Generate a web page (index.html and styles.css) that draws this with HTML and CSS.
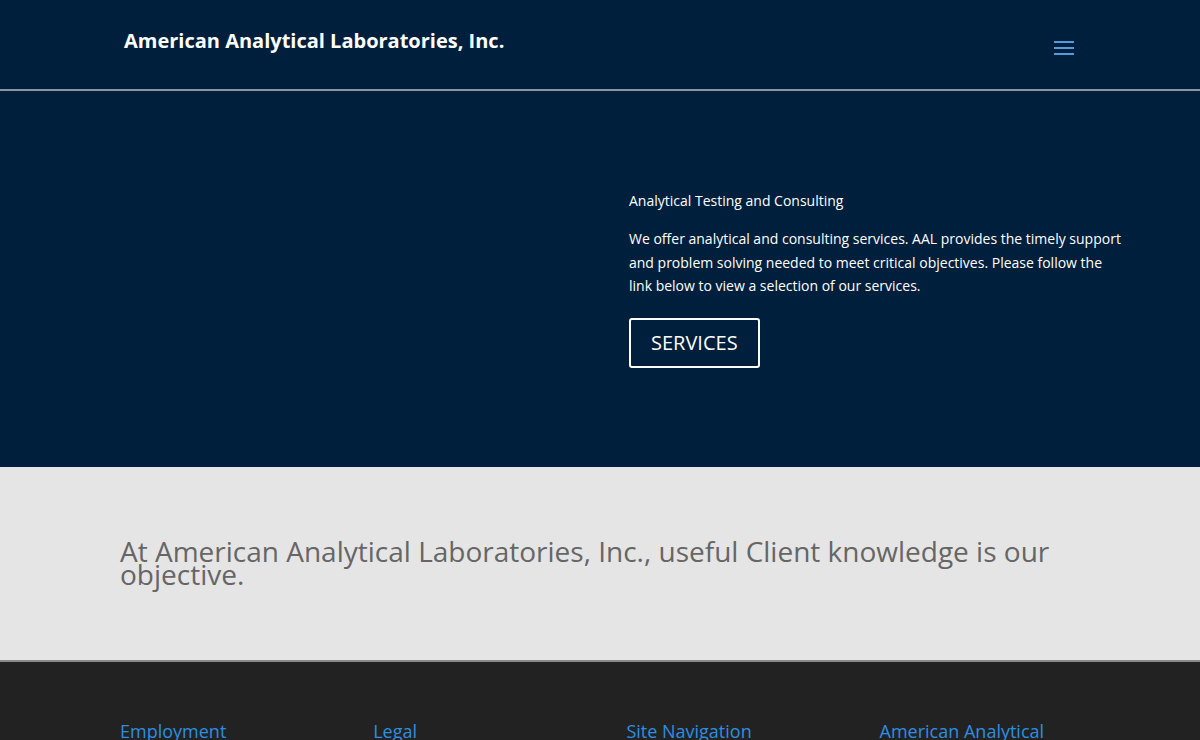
FILE: index.html
```html
<!DOCTYPE html>
<html lang="en">
<head>
    <meta charset="UTF-8">
    <meta name="viewport" content="width=device-width, initial-scale=1.0">
    <title>American Analytical Laboratories, Inc.</title>
    <link rel="stylesheet" href="styles.css">
</head>
<body>
    <!-- Header -->
    <header class="site-header">
        <div class="container header-inner">
            <a href="#" class="logo">American Analytical Laboratories, Inc.</a>
            <button class="menu-toggle" aria-label="Menu">
                <span></span>
                <span></span>
                <span></span>
            </button>
        </div>
    </header>

    <!-- Hero -->
    <section class="hero">
        <div class="container-wide hero-row">
            <div class="hero-col"></div>
            <div class="hero-col hero-text">
                <h4 class="hero-title">Analytical Testing and Consulting</h4>
                <p>We offer analytical and consulting services. AAL provides the timely support and problem solving needed to meet critical objectives. Please follow the link below to view a selection of our services.</p>
                <a href="#" class="btn-outline">SERVICES</a>
            </div>
        </div>
    </section>

    <!-- Tagline -->
    <section class="tagline">
        <div class="container">
            <h2>At American Analytical Laboratories, Inc., useful Client knowledge is our objective.</h2>
        </div>
    </section>

    <!-- Footer -->
    <footer class="site-footer">
        <div class="container footer-row">
            <div class="footer-col"><h4>Employment</h4></div>
            <div class="footer-col"><h4>Legal</h4></div>
            <div class="footer-col"><h4>Site Navigation</h4></div>
            <div class="footer-col"><h4>American Analytical</h4></div>
        </div>
    </footer>
</body>
</html>
```

FILE: styles.css
```css
* {
    margin: 0;
    padding: 0;
    box-sizing: border-box;
}

body {
    font-family: "Open Sans", Arial, sans-serif;
    background-color: #222222;
    color: #ffffff;
    font-size: 14px;
}

.container {
    width: 960px;
    margin: 0 auto;
}

.container-wide {
    width: 1080px;
    margin: 0 auto;
}

/* Header */
.site-header {
    background-color: #001f3c;
    border-bottom: 2px solid #8a95a1;
}

.header-inner {
    height: 89px;
    display: flex;
    justify-content: space-between;
    align-items: center;
}

.logo {
    color: #ffffff;
    text-decoration: none;
    font-weight: 700;
    font-size: 20px;
    margin-left: 4px;
    margin-top: -9px;
}

.menu-toggle {
    background: none;
    border: none;
    width: 20px;
    margin-right: 6px;
    margin-top: 7px;
    display: flex;
    flex-direction: column;
    gap: 4px;
    cursor: pointer;
}

.menu-toggle span {
    display: block;
    height: 2px;
    width: 20px;
    background-color: #569cda;
}

/* Hero */
.hero {
    background-color: #001f3c;
    padding: 98px 0 99px;
}

.hero-row {
    display: flex;
    gap: 59px;
}

.hero-col {
    width: 510px;
}

.hero-text {
    padding-right: 16px;
}

.hero-title {
    font-size: 14px;
    font-weight: 400;
    line-height: 23.8px;
    margin-bottom: 14px;
}

.hero-text p {
    font-size: 14px;
    line-height: 23.8px;
    margin-bottom: 20px;
}

.btn-outline {
    display: inline-block;
    color: #ffffff;
    text-decoration: none;
    font-size: 20px;
    line-height: 34px;
    padding: 6px 20px;
    border: 2px solid #ffffff;
    border-radius: 3px;
}

/* Tagline */
.tagline {
    background-color: #e5e5e5;
    padding: 73px 0 74px;
    border-bottom: 2px solid #8a8a8a;
}

.tagline h2 {
    font-size: 28px;
    font-weight: 400;
    line-height: 23px;
    color: #666666;
}

/* Footer */
.site-footer {
    background-color: #222222;
    padding-top: 60px;
    min-height: 78px;
}

.footer-row {
    display: flex;
    gap: 52.8px;
}

.footer-col {
    width: 200.4px;
}

.footer-col h4 {
    font-size: 18px;
    font-weight: 400;
    line-height: 18px;
    color: #2e8fe0;
}
```
